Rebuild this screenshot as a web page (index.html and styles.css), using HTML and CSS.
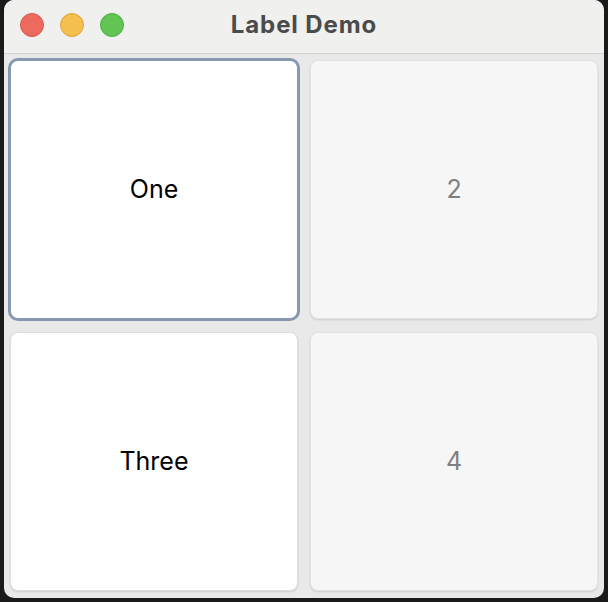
FILE: index.html
```html
<!DOCTYPE html>
<html>
<head>
<meta charset="utf-8">
<link rel="stylesheet" href="styles.css">
</head>
<body>
<div class="window">
  <div class="titlebar">
    <div class="lights">
      <span class="light red"></span>
      <span class="light yellow"></span>
      <span class="light green"></span>
    </div>
    <div class="title">Label Demo</div>
  </div>
  <div class="grid">
    <div class="card focused">One</div>
    <div class="card muted">2</div>
    <div class="card">Three</div>
    <div class="card muted">4</div>
  </div>
</div>
</body>
</html>
```

FILE: styles.css
```css
html, body {
  margin: 0;
  padding: 0;
  background: #1a1a1a;
  width: 608px;
  height: 602px;
  overflow: hidden;
}
body {
  padding: 0 4px 4px 4px;
  box-sizing: border-box;
  font-family: Inter, "Noto Sans", sans-serif;
}
.window {
  width: 600px;
  height: 598px;
  background: #e9e9e9;
  border-radius: 10px;
  overflow: hidden;
  display: flex;
  flex-direction: column;
}
.titlebar {
  position: relative;
  height: 53px;
  flex: none;
  background: #f0f0ee;
  border-bottom: 1px solid #d2d2d0;
  display: flex;
  align-items: center;
  justify-content: center;
}
.lights {
  position: absolute;
  left: 16px;
  top: 13px;
  display: flex;
  gap: 16px;
}
.light {
  width: 24px;
  height: 24px;
  border-radius: 50%;
  box-sizing: border-box;
}
.red { background: #ed6a5e; border: 1px solid #d6584d; }
.yellow { background: #f5bf4f; border: 1px solid #dca43a; }
.green { background: #61c554; border: 1px solid #50ac44; }
.title {
  font-weight: 700;
  font-size: 24px;
  letter-spacing: 0.9px;
  color: #4b4b4b;
  margin-top: -4px;
}
.grid {
  flex: 1;
  display: grid;
  grid-template-columns: 1fr 1fr;
  grid-template-rows: 1fr 1fr;
  column-gap: 12px;
  row-gap: 13px;
  padding: 6px 6px 7px 6px;
}
.card {
  background: #ffffff;
  border-radius: 8px;
  border: 1px solid #dedede;
  box-shadow: 0 1px 2px rgba(0,0,0,0.12);
  display: flex;
  align-items: center;
  justify-content: center;
  font-size: 25px;
  color: #000;
  padding-bottom: 2px;
}
.card.muted {
  background: #f6f6f6;
  color: #7f7f7f;
  border-color: #e3e3e3;
}
.card.focused {
  border-color: #8a9ab0;
  box-shadow: 0 0 0 2px #8797ae;
}
```
